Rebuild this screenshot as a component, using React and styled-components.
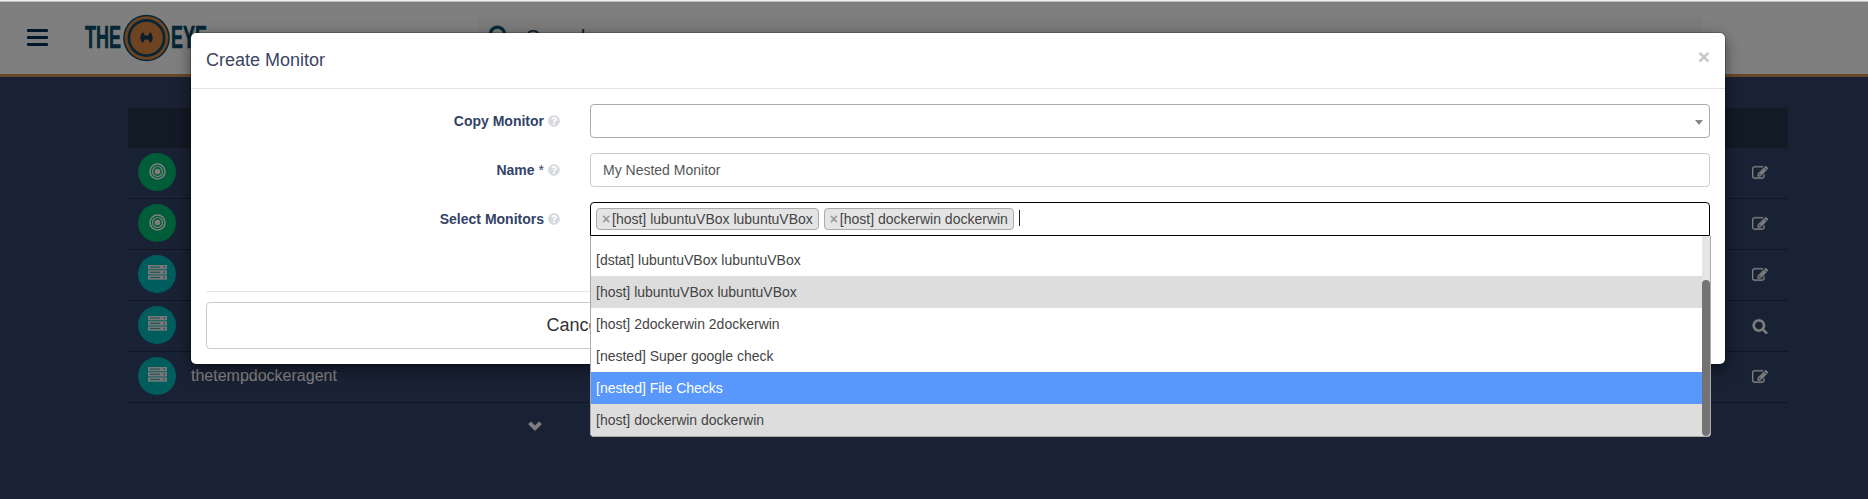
import React from "react";
import styled, { createGlobalStyle } from "styled-components";
import { FaQuestionCircle } from "react-icons/fa";

const GlobalStyle = createGlobalStyle`
  *, *::before, *::after { box-sizing: border-box; }
  html, body { margin: 0; padding: 0; height: 100%; overflow: hidden; }
  body { background: #334268; font-family: "Liberation Sans", Arial, sans-serif; font-size: 14px; line-height: 20px; }
`;

const Page = styled.div`
  position: relative;
  height: 499px;
  overflow: hidden;
  background: #334268;
`;

const TopBar = styled.header`
  display: flex;
  align-items: flex-start;
  height: 77px;
  background: #fff;
  border-bottom: 3px solid #ce8f4e;
`;

const MenuButton = styled.div`
  display: flex;
  flex: none;
  flex-direction: column;
  gap: 4px;
  width: 21px;
  margin: 29px 0 0 27px;
`;

const MenuBar = styled.span`
  height: 3px;
  border-radius: 1px;
  background: #00305c;
`;

const Logo = styled.div`
  display: flex;
  flex: none;
  width: 126px;
  height: 50px;
  margin: 13px 0 0 36px;
`;

const SearchBox = styled.div`
  display: flex;
  flex: none;
  align-items: flex-start;
  width: 1224px;
  height: 44px;
  margin: 16px 0 0 268px;
  padding: 8px 10px;
  background: #f6f6f6;
  color: #1c3f54;
  font-size: 21px;
  line-height: 24px;
`;

const SearchLabel = styled.span`
  margin: 1px 0 0 16px;
`;

const Table = styled.div`
  width: 1660px;
  margin: 31px 0 0 128px;
`;

const TableHead = styled.div`
  height: 40px;
  background: #24344c;
`;

const Row = styled.div`
  display: flex;
  align-items: flex-start;
  height: 51px;
  padding: 5px 20px 0 10px;
  border-bottom: 1px solid #202a43;
  color: #fff;
  font-size: 16px;
`;

const Badge = styled.span`
  display: flex;
  align-items: center;
  justify-content: center;
  width: 38px;
  height: 38px;
  padding-bottom: ${(p) => (p.$kind === "host" ? "3px" : "1px")};
  border-radius: 50%;
  background: ${(p) => (p.$kind === "host" ? "#00babc" : "#00ba72")};
`;

const RowName = styled.span`
  flex: 1;
  margin: 9px 0 0 15px;
`;

const RowIcon = styled.svg`
  width: 16px;
  height: 16px;
  margin-top: 12px;
  fill: #fff;
  stroke: #fff;
  stroke-width: 40;
`;

const RowChevron = styled.svg`
  width: 14px;
  height: 10px;
  margin: 15px 26px 0 0;
  fill: #fff;
`;

const MoreChevron = styled.svg`
  display: block;
  width: 14px;
  height: 10px;
  margin: 18px 0 0 528px;
  fill: #fff;
  stroke: #fff;
  stroke-width: 0.6;
  stroke-linejoin: round;
`;

const Backdrop = styled.div`
  position: absolute;
  inset: 0;
  padding: 33px 0 0 191px;
  background: rgba(0, 0, 0, 0.5);
`;

const WindowEdge = styled.div`
  position: absolute;
  inset: 0 0 auto 0;
  height: 2px;
  background: #f1f1f1;
  border-bottom: 1px solid #bcc0bf;
`;

const Modal = styled.section`
  width: 1534px;
  height: 331px;
  background: #fff;
  border-radius: 5px;
  box-shadow: 0 0 0 1px rgba(0, 0, 0, 0.2), 0 5px 15px rgba(0, 0, 0, 0.5);
`;

const ModalHeader = styled.div`
  display: flex;
  justify-content: space-between;
  height: 56px;
  padding: 14px 15px 0;
  border-bottom: 1px solid #e2e2e2;
`;

const Title = styled.h4`
  margin: 0;
  font-size: 18px;
  font-weight: 400;
  line-height: 26px;
  color: #3b4463;
`;

const Close = styled.span`
  font-size: 21px;
  font-weight: 700;
  line-height: 19px;
  color: #c6c6c6;
`;

const ModalBody = styled.div`
  padding: 15px 15px 0;
`;

const Field = styled.div`
  position: relative;
  display: grid;
  grid-template-columns: 354px 1120px;
  column-gap: 30px;
  height: 34px;
  margin-bottom: 15px;
`;

const Label = styled.label`
  display: flex;
  justify-content: flex-end;
  align-items: flex-start;
  gap: 4px;
  padding-top: 7px;
  font-weight: 700;
  color: #334267;

  svg { width: 12px; height: 12px; margin-top: 4px; color: #d6d9e0; }
`;

const Required = styled.span`
  font-weight: 400;
`;

const Control = styled.div`
  display: flex;
  align-items: center;
  height: 34px;
  padding: ${(p) => (p.$tags ? "0 5px" : "0 12px")};
  border: 1px solid ${(p) => p.$edge};
  border-radius: ${(p) => (p.$tags ? "4px 4px 0 0" : "4px")};
  background: #fff;
  color: #555;
`;

const Caret = styled.span`
  margin: 3px -6px 0 auto;
  border: 4px solid transparent;
  border-top: 5px solid #888;
  border-bottom: 0;
`;

const Tag = styled.span`
  display: flex;
  align-items: center;
  height: 22px;
  margin-right: 5px;
  padding: 0 5px;
  border: 1px solid #aaa;
  border-radius: 4px;
  background: #e4e4e4;
  color: #444;
`;

const TagRemove = styled.b`
  width: 10px;
  font-size: 14px;
  color: #999;
`;

const TextCursor = styled.span`
  width: 1px;
  height: 16px;
  margin-top: -2px;
  background: #222;
`;

const Dropdown = styled.div`
  position: absolute;
  z-index: 2;
  top: 34px;
  left: 384px;
  display: flex;
  width: 1121px;
  height: 201px;
  overflow: hidden;
  border: 1px solid #aaa;
  border-top: 0;
  border-radius: 0 0 4px 4px;
  background: #fff;
`;

const Options = styled.div`
  flex: 1;
  padding-top: 8px;
`;

const Option = styled.div`
  height: 32px;
  padding: 6px 5px;
  background: ${(p) => ({ active: "#5897fb", chosen: "#ddd" })[p.$state] || "#fff"};
  color: ${(p) => (p.$state === "active" ? "#fff" : "#444")};
`;

const ScrollTrack = styled.div`
  width: 8px;
  padding-top: 44px;
  background: #e5e5e5;
`;

const ScrollThumb = styled.div`
  height: 156px;
  border-radius: 4px;
  background: #737373;
`;

const ModalFooter = styled.div`
  display: grid;
  grid-template-columns: 1fr 1fr;
  column-gap: 30px;
  margin: 55px 15px 0;
  padding-top: 10px;
  border-top: 1px solid #e5e5e5;
`;

const Button = styled.button`
  height: 47px;
  border: 1px solid #ccc;
  border-radius: 4px;
  background: #fff;
  color: #333;
  font: 18px "Liberation Sans", Arial, sans-serif;
`;

const editPath =
  "M888 1184l116-116-152-152-116 116v56h96v96h56zm440-720q-16-16-33 1l-350 350q-17 17-1 33t33-1l350-350q17-17 1-33zm80 594v190q0 119-84.5 203.5t-203.5 84.5h-832q-119 0-203.5-84.5t-84.5-203.5v-832q0-119 84.5-203.5t203.5-84.5h832q63 0 117 25 15 7 18 23 3 17-9 29l-49 49q-14 14-32 8-23-6-45-6h-832q-66 0-113 47t-47 113v832q0 66 47 113t113 47h832q66 0 113-47t47-113v-126q0-13 9-22l64-64q15-15 35-7t20 29zm-96-738l288 288-672 672h-288v-288zm444 132l-92 92-288-288 92-92q28-28 68-28t68 28l152 152q28 28 28 68t-28 68z";
const searchPath =
  "M1216 832q0-185-131.5-316.5t-316.5-131.5-316.5 131.5-131.5 316.5 131.5 316.5 316.5 131.5 316.5-131.5 131.5-316.5zm512 832q0 52-38 90t-90 38q-54 0-90-38l-343-342q-179 124-399 124-143 0-273.5-55.5t-225-150-150-225-55.5-273.5 55.5-273.5 150-225 225-150 273.5-55.5 273.5 55.5 225 150 150 225 55.5 273.5q0 220-124 399l343 343q37 37 37 90z";
const chevronPath = "M2.9 0.8L7 4.8l4.100-4L13.500 3.200 7 9.600 0.500 3.200z";

const TargetIcon = () => (
  <svg width="17" height="17" viewBox="0 0 17 17" fill="none" stroke="#fff">
    <circle cx="8.5" cy="8.5" r="7.5" strokeWidth="1.5" />
    <circle cx="8.5" cy="8.5" r="5" strokeWidth="1.2" />
    <circle cx="8.5" cy="8.5" r="2.8" fill="#fff" stroke="none" />
  </svg>
);

const ServerIcon = () => (
  <svg width="19" height="15" viewBox="0 0 19 15">
    {[0, 5.2, 10.4].map((y) => (
      <g key={y}>
        <rect x="0" y={y} width="19" height="4.3" fill="#f0f0f0" />
        <rect x="2" y={y + 1.5} width="10" height="1.2" fill="#52a5a8" />
        <rect x="15.5" y={y + 1.3} width="1.6" height="1.6" fill="#52a5a8" />
      </g>
    ))}
  </svg>
);

const LogoMark = () => (
  <svg width="126" height="50" viewBox="0 0 126 50" overflow="visible">
    <g
      fill="#0d4a6b"
      stroke="#0d4a6b"
      strokeWidth="0.7"
      fontFamily="'Liberation Sans', sans-serif"
      fontWeight="700"
      fontSize="31"
    >
      <text x="1" y="35.3" textLength="36" lengthAdjust="spacingAndGlyphs">THE</text>
      <text x="87" y="35.3" textLength="36" lengthAdjust="spacingAndGlyphs">EYE</text>
    </g>
    <circle cx="62.500" cy="25" r="23.3" fill="#0d4a6b" />
    <circle cx="62.500" cy="25" r="21.8" fill="#dd8741" />
    <circle cx="62.500" cy="25" r="19" fill="#0d4a6b" />
    <circle cx="62.500" cy="25" r="16.3" fill="#dd8741" />
    <path d="M59 19l1.700 3.600h3.600L66 19q2.800 2 2.800 5.500T66 30l-1.700-3.600h-3.600L59 30q-2.800-2-2.800-5.500T59 19z" fill="#123b54" />
  </svg>
);

const rows = [
  { kind: "check", name: "", icon: editPath },
  { kind: "check", name: "", icon: editPath },
  { kind: "host", name: "", icon: editPath },
  { kind: "host", name: "", icon: searchPath, expandable: true },
  { kind: "host", name: "thetempdockeragent", icon: editPath },
];

const options = [
  { text: "[dstat] lubuntuVBox lubuntuVBox" },
  { text: "[host] lubuntuVBox lubuntuVBox", state: "chosen" },
  { text: "[host] 2dockerwin 2dockerwin" },
  { text: "[nested] Super google check" },
  { text: "[nested] File Checks", state: "active" },
  { text: "[host] dockerwin dockerwin", state: "chosen" },
];

const tags = ["[host] lubuntuVBox lubuntuVBox", "[host] dockerwin dockerwin"];

export default function App() {
  return (
    <Page>
      <GlobalStyle />
      <TopBar>
        <MenuButton><MenuBar /><MenuBar /><MenuBar /></MenuButton>
        <Logo><LogoMark /></Logo>
        <SearchBox>
          <svg width="22" height="22" viewBox="0 0 1792 1792" fill="#0d5270"><path d={searchPath} /></svg>
          <SearchLabel>Search</SearchLabel>
        </SearchBox>
      </TopBar>
      <Table>
        <TableHead />
        {rows.map((r, i) => (
          <Row key={i}>
            <Badge $kind={r.kind}>{r.kind === "host" ? <ServerIcon /> : <TargetIcon />}</Badge>
            <RowName>{r.name}</RowName>
            {r.expandable && <RowChevron viewBox="0 0 14 10"><path d={chevronPath} /></RowChevron>}
            <RowIcon viewBox="0 0 1792 1792"><path d={r.icon} /></RowIcon>
          </Row>
        ))}
      </Table>
      <MoreChevron viewBox="0 0 14 10"><path d={chevronPath} /></MoreChevron>
      <Backdrop>
        <Modal>
          <ModalHeader>
            <Title>Create Monitor</Title>
            <Close>×</Close>
          </ModalHeader>
          <ModalBody>
            <Field>
              <Label>Copy Monitor<FaQuestionCircle /></Label>
              <Control $edge="#aaa"><Caret /></Control>
            </Field>
            <Field>
              <Label>Name <Required>*</Required><FaQuestionCircle /></Label>
              <Control $edge="#ccc">My Nested Monitor</Control>
            </Field>
            <Field>
              <Label>Select Monitors<FaQuestionCircle /></Label>
              <Control $edge="#000" $tags>
                {tags.map((t) => (
                  <Tag key={t}><TagRemove>×</TagRemove>{t}</Tag>
                ))}
                <TextCursor />
              </Control>
              <Dropdown>
                <Options>
                  {options.map((o) => (
                    <Option key={o.text} $state={o.state}>{o.text}</Option>
                  ))}
                </Options>
                <ScrollTrack><ScrollThumb /></ScrollTrack>
              </Dropdown>
            </Field>
          </ModalBody>
          <ModalFooter><Button>Cancel</Button></ModalFooter>
        </Modal>
      </Backdrop>
      <WindowEdge />
    </Page>
  );
}
